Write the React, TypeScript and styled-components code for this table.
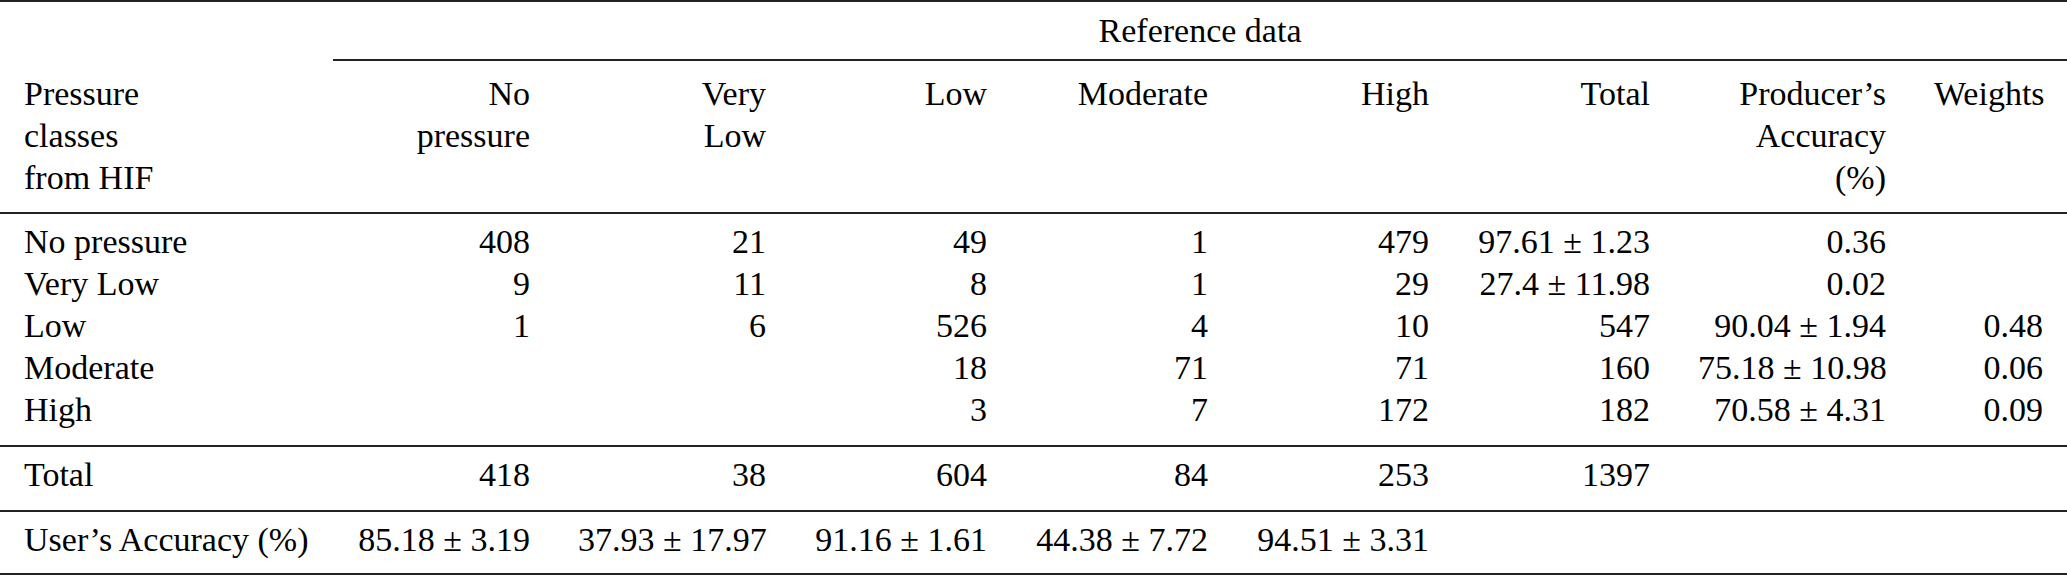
import React from "react";
import styled, { createGlobalStyle } from "styled-components";

const GlobalStyle = createGlobalStyle`
  html, body {
    margin: 0;
    padding: 0;
    background: #ffffff;
  }
  body {
    font-family: "Liberation Serif", Tinos, "Times New Roman", serif;
  }
`;

const RULE = "#222222";

const Table = styled.table`
  width: 2067px;
  table-layout: fixed;
  border-collapse: separate;
  border-spacing: 0;
  border-top: 2px solid ${RULE};
  font-family: "Liberation Serif", Tinos, "Times New Roman", serif;
  font-size: 34px;
  line-height: 42px;
  color: #000000;
`;

const Col = styled.col<{ $w: number }>`
  width: ${(p) => p.$w}px;
`;

const Row = styled.tr<{ $pt?: number; $pb?: number; $rule?: boolean }>`
  & > td {
    padding-top: ${(p) => p.$pt ?? 0}px;
    padding-bottom: ${(p) => p.$pb ?? 0}px;
    ${(p) => (p.$rule ? `border-bottom: 2px solid ${RULE};` : "")}
  }
`;

const Cell = styled.td<{ $align?: "left" | "right" | "center"; $rule?: boolean }>`
  font-family: "Liberation Serif", Tinos, "Times New Roman", serif;
  font-size: 34px;
  padding-left: 24px;
  padding-right: 24px;
  vertical-align: top;
  white-space: nowrap;
  text-align: ${(p) => p.$align ?? "right"};
  ${(p) => (p.$rule ? `border-bottom: 2px solid ${RULE};` : "")}
`;

const PM = styled.span`
  margin: 0 0.25em;
`;

type Val = string | [string, string];

const show = (v: Val) =>
  typeof v === "string" ? (
    v
  ) : (
    <>
      {v[0]}
      <PM>±</PM>
      {v[1]}
    </>
  );

const widths = [333, 221, 236, 221, 221, 221, 221, 236, 157];

const body: Val[][] = [
  ["No pressure", "408", "21", "49", "1", "479", ["97.61", "1.23"], "0.36", ""],
  ["Very Low", "9", "11", "8", "1", "29", ["27.4", "11.98"], "0.02", ""],
  ["Low", "1", "6", "526", "4", "10", "547", ["90.04", "1.94"], "0.48"],
  ["Moderate", "", "", "18", "71", "71", "160", ["75.18", "10.98"], "0.06"],
  ["High", "", "", "3", "7", "172", "182", ["70.58", "4.31"], "0.09"],
];

const totalRow: Val[] = ["Total", "418", "38", "604", "84", "253", "1397", "", ""];

const usersRow: Val[] = [
  "User’s Accuracy (%)",
  ["85.18", "3.19"],
  ["37.93", "17.97"],
  ["91.16", "1.61"],
  ["44.38", "7.72"],
  ["94.51", "3.31"],
  "",
  "",
  "",
];

const renderCells = (vals: Val[]) =>
  vals.map((v, i) => (
    <Cell key={i} $align={i === 0 ? "left" : "right"}>
      {show(v)}
    </Cell>
  ));

export default function App() {
  return (
    <>
      <GlobalStyle />
      <Table>
        <colgroup>
          {widths.map((w, i) => (
            <Col key={i} $w={w} />
          ))}
        </colgroup>
        <thead>
          <Row $pt={8} $pb={7}>
            <Cell $align="left" />
            <Cell colSpan={8} $align="center" $rule>
              Reference data
            </Cell>
          </Row>
          <Row $pt={12} $pb={13} $rule>
            <Cell $align="left">
              Pressure
              <br />
              classes
              <br />
              from HIF
            </Cell>
            <Cell>
              No
              <br />
              pressure
            </Cell>
            <Cell>
              Very
              <br />
              Low
            </Cell>
            <Cell>Low</Cell>
            <Cell>Moderate</Cell>
            <Cell>High</Cell>
            <Cell>Total</Cell>
            <Cell>
              Producer’s
              <br />
              Accuracy
              <br />
              (%)
            </Cell>
            <Cell>Weights</Cell>
          </Row>
        </thead>
        <tbody>
          {body.map((r, i) => (
            <Row
              key={i}
              $pt={i === 0 ? 7 : 0}
              $pb={i === body.length - 1 ? 14 : 0}
              $rule={i === body.length - 1}
            >
              {renderCells(r)}
            </Row>
          ))}
          <Row $pt={7} $pb={14} $rule>
            {renderCells(totalRow)}
          </Row>
          <Row $pt={7} $pb={12} $rule>
            {renderCells(usersRow)}
          </Row>
        </tbody>
      </Table>
    </>
  );
}
